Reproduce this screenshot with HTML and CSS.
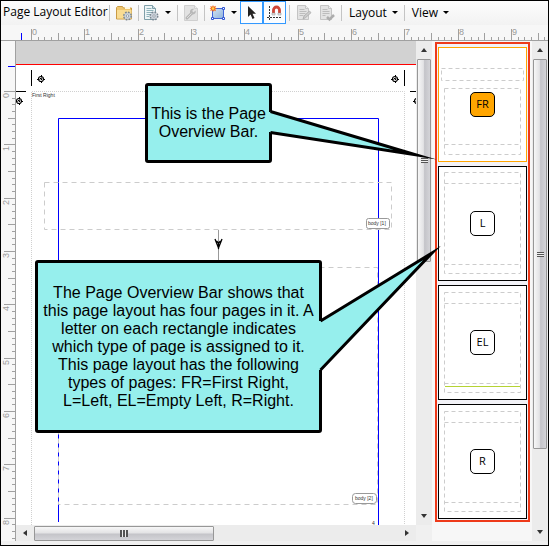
FILE: index.html
```html
<!DOCTYPE html>
<html lang="en">
<head>
<meta charset="utf-8">
<title>Page Layout Editor</title>
<link rel="stylesheet" href="styles.css">
</head>
<body>
<div class="app">
  <header class="toolbar">
    <h1 class="title">Page Layout Editor</h1>
    <span class="sep"></span>
    <button class="tool" aria-label="Open page layout">
      <svg class="icon" viewBox="0 0 16 16"><path d="M.5 14V2.5l1-1h5l1 1.5h8v11z" fill="#efc66e" stroke="#c99b45"/><path d="M9 2h5v2H9z" fill="#fff8e0"/><path d="M1 5h14.500v8.500H1z" fill="#f9dc92"/><g><circle cx="11.500" cy="11" r="3.500" fill="#c5cdd6" stroke="#7c8792" stroke-width="2" stroke-dasharray="1.6 1.150"/><circle cx="11.500" cy="11" r="3" fill="#cbd3db"/><circle cx="11.500" cy="11" r="1.200" fill="#fff" stroke="#7c8792" stroke-width=".7"/></g></svg>
    </button>
    <span class="sep"></span>
    <button class="tool menu" aria-label="Page properties">
      <svg class="icon" viewBox="0 0 16 16"><path d="M.5.5h8l3 3v11H.5z" fill="#eef5f7" stroke="#7f9fa8"/><path d="M8.500.5v3h3" fill="#c6dbe0" stroke="#7f9fa8"/><path d="M2.500 3.500h5M2.500 5.500h7M2.500 7.500h7M2.500 9.500h4M2.500 11.500h3" stroke="#8fb3bb"/><circle cx="10" cy="11" r="3.500" fill="#c5cdd6" stroke="#7c8792" stroke-width="2" stroke-dasharray="1.6 1.150"/><circle cx="10" cy="11" r="3" fill="#cbd3db"/><circle cx="10" cy="11" r="1.200" fill="#fff" stroke="#7c8792" stroke-width=".7"/></svg>
      <span class="caret"></span>
    </button>
    <span class="sep"></span>
    <button class="tool narrow" aria-label="Page tools" disabled>
      <svg class="icon" viewBox="0 0 16 16"><path d="M1.500.5h10l3 3v12h-13z" fill="#e2e2e2" stroke="#cfcfcf"/><path d="M11.500.5v3h3" fill="#eee" stroke="#cfcfcf"/><path d="M4 13l5-5" stroke="#b5b5b5" stroke-width="3" stroke-linecap="round"/><path d="M12.500 5.500l-2 2-1.500-1.500 2-2c-2-.8-4.500.7-4 3.500.5 2 3 2.500 4.500 1.500 1.200-.9 1.600-2.200 1-3.500z" fill="#b8b8b8"/><path d="M4 13l4.500-4.500" stroke="#ddd"/></svg>
    </button>
    <span class="sep"></span>
    <button class="tool menu" aria-label="Insert frame">
      <svg class="icon" viewBox="0 0 16 16"><defs><linearGradient id="fg" x2="1" y2="1"><stop stop-color="#d2e4f4"/><stop offset="1" stop-color="#8fb1da"/></linearGradient></defs><path d="M2.500 3.500h11v10h-11z" fill="url(#fg)" stroke="#4063d8"/><path d="M1.500 12.500h2v2h-2zM12.500 12.500h2v2h-2zM12.500 2.500h2v2h-2z" fill="#fff" stroke="#2f55d4"/><path d="M3 0l.8 1.700L6 .8l-.8 2L7 3.500l-1.800.8.8 2-2-.8L3 7l-.8-1.700-2 .7.800-2L-.5 3.500 1 2.700.2.900l2 .8z" fill="#f26a1b"/><circle cx="3" cy="3.500" r="1.300" fill="#ffd34d"/></svg>
      <span class="caret"></span>
    </button>
    <button class="tool active" aria-label="Select" aria-pressed="true">
      <svg class="icon" viewBox="0 0 16 16"><path d="M4 1v11l2.600-2.500L8.500 14l2-.9-2-4.300H12z" fill="#222"/></svg>
    </button>
    <button class="tool active" aria-label="Snap to guides" aria-pressed="true">
      <svg class="icon" viewBox="0 0 16 16"><path d="M2.500 1v15" stroke="#333" stroke-dasharray="2 1"/><path d="M0 12.500h14" stroke="#333" stroke-dasharray="2 1"/><path d="M6.500 9V5a3 3 0 0 1 6 0v4" fill="none" stroke="#cf4436" stroke-width="2.800"/><path d="M5 8h3v2H5zM11 8h3v2h-3z" fill="#e5e5e5" stroke="#888" stroke-width=".5"/></svg>
    </button>
    <span class="sep"></span>
    <button class="tool" aria-label="Edit page" disabled>
      <svg class="icon" viewBox="0 0 16 16"><path d="M1.500.5h8l3 3v11h-11z" fill="#e3e3e3" stroke="#c4c4c4"/><path d="M9.500.5v3h3" fill="#eee" stroke="#c4c4c4"/><path d="M3.500 4.500h5M3.500 6.500h7M3.500 8.500h6M3.500 10.500h4" stroke="#bdbdbd"/><path d="M7 14l1-3 5.500-5 1.500 1.700-5.500 5z" fill="#ccc" stroke="#aaa" stroke-width=".8"/></svg>
    </button>
    <button class="tool" aria-label="Apply page" disabled>
      <svg class="icon" viewBox="0 0 16 16"><path d="M1.500.5h8l3 3v11h-11z" fill="#e3e3e3" stroke="#c4c4c4"/><path d="M9.500.5v3h3" fill="#eee" stroke="#c4c4c4"/><path d="M3.500 4.500h5M3.500 6.500h7M3.500 8.500h7M3.500 10.500h3" stroke="#bdbdbd"/><path d="M8 12l2.500 2.500L15 10" fill="none" stroke="#adadad" stroke-width="2.500"/></svg>
    </button>
    <span class="sep"></span>
    <button class="text-menu">Layout<span class="caret"></span></button>
    <span class="sep"></span>
    <button class="text-menu">View<span class="caret"></span></button>
  </header>

  <div class="ruler-top"><svg class="ruler-svg"><g id="ticks-x" transform="translate(-1 -25)"></g></svg></div>

  <main class="workspace">
    <div class="ruler-side"><svg class="ruler-svg"><g id="ticks-y" transform="translate(-1 -41)"></g></svg></div>

    <section class="editor">
      <div class="canvas">
        <svg class="drawing" width="400" height="485" viewBox="16 41 400 485">
          <defs>
            <g id="reg" fill="none" stroke="#000"><circle r="2.500" stroke-width="1.200"/><path d="M-4 .5h2.500M2 .5h2M.5-4v2.500M.5 2v2M-1-1l2 2M1-1l-1 2" /></g>
          </defs>
          <path d="M16 41h400v23H16z" fill="#d2d2d2"/>
          <path d="M16 64h400v1H16z" fill="#f00"/>
          <path d="M31.500 525V91.500h373V525" fill="none" stroke="#d0d0d0" stroke-dasharray="1 1"/>
          <path d="M31.500 70v16M16 91.500h10M404.500 70v16M410 91.500h6" stroke="#000"/>
          <use href="#reg" x="41" y="79"/><use href="#reg" x="19" y="101"/>
          <use href="#reg" x="395" y="79"/><use href="#reg" x="417" y="101"/>
          <text x="32" y="97" class="tiny">First Right</text>
          <path d="M58.500 522V118.500h320V525" fill="none" stroke="#00f"/>
          <path d="M44.500 182.500h347v47h-347z" fill="none" stroke="#ccc" stroke-dasharray="5 4"/>
          <path d="M58.500 267.500h319v237h-319z" fill="none" stroke="#ccc" stroke-dasharray="5 4"/>
          <path d="M218.500 230v32" stroke="#999"/>
          <path d="M215 239l3.500 9 3.500-9M216.500 241l2 2 2-2M218.500 243v6" fill="none" stroke="#000" stroke-width="1.300"/>
          <rect x="366.500" y="218.500" width="23" height="10" rx="2" fill="#fff" stroke="#999"/>
          <text x="368" y="225" class="tiny">body [1]</text>
          <rect x="352.500" y="493.500" width="24" height="10" rx="3" fill="#fff" stroke="#999"/>
          <text x="355" y="500" class="tiny">body [2]</text>
          <text x="372" y="525" class="tiny">4</text>
        </svg>
      </div>
      <div class="bar horizontal" aria-hidden="true"><span class="arrow left"></span><span class="thumb thumb-page-x"></span><span class="arrow right"></span></div>
    </section>

    <div class="bar vertical canvas-bar" aria-hidden="true"><span class="arrow up"></span><span class="thumb thumb-page-y"></span><span class="arrow down"></span></div>

    <aside class="overview" aria-label="Page Overview Bar">
      <div class="frame">
        <button class="page selected"><svg class="page-lines" viewBox="0 0 89 115"><path d="M3.500 21.500h82v12h-82zM6.500 41.500h76v66h-76zM6.500 97.500h76"/></svg><span class="badge">FR</span></button>
        <button class="page"><svg class="page-lines" viewBox="0 0 89 115"><path d="M6.500 6.500h76v101h-76zM6.500 17.500h76M6.500 98.500h76"/></svg><span class="badge">L</span></button>
        <button class="page"><svg class="page-lines" viewBox="0 0 89 115"><path d="M6.500 7.500h76v100h-76zM6.500 18.500h76M6.500 98.500h76"/><path class="footline" d="M7 101.500h75"/></svg><span class="badge">EL</span></button>
        <button class="page"><svg class="page-lines" viewBox="0 0 89 115"><path d="M6.500 7.500h76v100h-76zM6.500 18.500h76M6.500 98.500h76"/></svg><span class="badge">R</span></button>
      </div>
    </aside>

    <div class="bar vertical" aria-hidden="true"><span class="arrow up"></span><span class="thumb thumb-overview"></span><span class="arrow down"></span></div>
  </main>
  <footer class="status"></footer>

  <div class="callout callout-name">
    <p>This is the Page<br>Overview Bar.</p>
    <svg class="tail" width="170" height="75"><path class="opening" d="M0 26h3v20H0z"/><path d="M1.500 25.500L146.500 68.700 1.500 46.500"/></svg>
  </div>
  <div class="callout callout-detail">
    <p>The Page Overview Bar shows that<br>this page layout has four pages in it. A<br>letter on each rectangle indicates<br>which type of page is assigned to it.<br>This page layout has the following<br>types of pages: FR=First Right,<br>L=Left, EL=Empty Left, R=Right.</p>
    <svg class="tail" width="124" height="130"><path class="opening" d="M0 58h3v49H0z"/><path d="M1.500 58L113-10 1.500 107"/></svg>
  </div>
</div>
<script src="rulers.js"></script>
</body>
</html>
```
FILE: styles.css
```css
* { box-sizing: border-box; }

body {
  margin: 0;
  font-family: "Open Sans", "Noto Sans", sans-serif;
  font-size: 12px;
  color: #000;
}

button {
  font: inherit;
  color: inherit;
  border: 0;
  padding: 0;
  background: none;
}

svg { display: block; }

.app {
  position: relative;
  display: flex;
  flex-direction: column;
  height: 100vh;
  border: 1px solid #000;
  background: #f0f0f0;
  overflow: hidden;
}

/* Toolbar */
.toolbar {
  flex: 0 0 24px;
  display: flex;
  align-items: stretch;
  background: linear-gradient(#fdfdfd, #f2f2f2);
}
.title {
  margin: 0;
  padding-left: 2px;
  width: 105px;
  font-size: 12px;
  font-weight: 400;
  line-height: 22px;
  white-space: nowrap;
}
.sep {
  flex: 0 0 1px;
  margin: 4px 2px 4px 3px;
  background: #c4c4c4;
}
.tool {
  flex: 0 0 23px;
  height: 23px;
  display: flex;
  align-items: center;
  justify-content: center;
}
.tool.narrow { flex-basis: 21px; }
.tool.menu {
  flex-basis: 33px;
  justify-content: flex-start;
  padding-left: 3px;
  gap: 5px;
}
.tool.active {
  border: 1px solid #3399ff;
  background: #fbfdff;
}
.icon { width: 16px; height: 16px; flex: none; overflow: visible; }
.caret {
  border: 3px solid transparent;
  border-top-color: #000;
  border-bottom: 0;
}
.text-menu {
  display: flex;
  align-items: center;
  gap: 5px;
  height: 22px;
  padding: 0 3px 0 5px;
}

/* Rulers */
.ruler-top {
  flex: 0 0 16px;
  min-height: 0;
  background: #f7f7f7;
  border-bottom: 1px solid #a0a0a0;
}
.ruler-side {
  flex: 0 0 15px;
  min-width: 0;
  background: #f7f7f7;
  border-right: 1px solid #a0a0a0;
}
.ruler-svg { width: 100%; height: 100%; }
.ruler-svg path { stroke: #a0a0a0; }
.ruler-svg .cursor { stroke: #00f; }
.ruler-svg text {
  font-family: "Liberation Sans", sans-serif;
  font-size: 9px;
  fill: #999;
}

/* Work area */
.workspace { flex: 1; display: flex; min-height: 0; }
.editor { flex: 1; min-width: 0; display: flex; flex-direction: column; }
.canvas { flex: 1; min-height: 0; overflow: hidden; background: #fff; }
.tiny {
  font-family: "Liberation Sans", sans-serif;
  font-size: 5px;
  fill: #333;
}
.status { flex: 0 0 4px; }

/* Scroll bars */
.bar { display: flex; background: #ececec; }
.bar.vertical { flex: 0 0 16px; flex-direction: column; align-items: center; }
.bar.horizontal { flex: 0 0 16px; align-items: center; }
.canvas-bar { margin-bottom: 16px; }
.arrow {
  flex: 0 0 18px;
  align-self: stretch;
  display: flex;
  align-items: center;
  justify-content: center;
}
.arrow::before { content: ""; border: 3px solid transparent; }
.arrow.up::before { border-bottom: 4px solid #333; border-top: 0; }
.arrow.down::before { border-top: 4px solid #333; border-bottom: 0; }
.arrow.left::before { border-right: 4px solid #333; border-left: 0; }
.arrow.right::before { border-left: 4px solid #333; border-right: 0; }
.arrow.down { margin-top: auto; }
.arrow.right { margin-left: auto; }
.thumb {
  display: flex;
  align-items: center;
  justify-content: center;
  border: 1px solid #979797;
  border-radius: 1px;
}
.vertical .thumb { width: 14px; background: linear-gradient(90deg, #f7f7f7, #e3e3e5 45%, #c4c4c9 55%, #d4d4d8); }
.horizontal .thumb { height: 15px; background: linear-gradient(#f7f7f7, #e3e3e5 45%, #c4c4c9 55%, #d4d4d8); }
.thumb::before { content: ""; }
.vertical .thumb::before { width: 7px; height: 5px; background: repeating-linear-gradient(#555 0 1px, #eee 1px 2px); }
.horizontal .thumb::before { width: 8px; height: 7px; background: repeating-linear-gradient(90deg, #555 0 2px, #eee 2px 3px); }
.thumb-page-x { width: 45%; }
.thumb-page-y { height: 42%; }
.thumb-overview { height: 78%; }

/* Page overview */
.overview { flex: 0 0 100px; background: #f7f7f7; }
.frame {
  display: flex;
  flex-direction: column;
  gap: 4px;
  margin: 1px 2px 0 3px;
  padding: 3px 1px 1px;
  border: 2px solid #ee3a1a;
  background: #f2f2f7;
}
.page {
  position: relative;
  display: flex;
  align-items: center;
  justify-content: center;
  height: 115px;
  background: #fff;
  outline: 1px solid #000;
  outline-offset: -1px;
}
.page.selected { outline-color: #ffa500; }
.page-lines {
  position: absolute;
  inset: 0;
  width: 100%;
  height: 100%;
  fill: none;
  stroke: #ccc;
  stroke-dasharray: 4 3;
}
.page-lines .footline { stroke: #b5d334; stroke-dasharray: none; }
.badge {
  position: relative;
  width: 25px;
  height: 25px;
  border: 1px solid #000;
  border-radius: 5px;
  background: #fff;
  font-size: 11px;
  line-height: 22px;
  text-align: center;
}
.selected .badge { background: #ffa500; }

/* Annotation callouts */
.callout {
  position: absolute;
  display: flex;
  align-items: center;
  justify-content: center;
  border: 3px solid #000;
  border-radius: 3px;
  background: #96efed;
  font-family: "Liberation Sans", Arial, sans-serif;
  font-size: 16px;
  line-height: 18px;
  text-align: center;
  white-space: nowrap;
}
.callout p { margin: 0; }
.callout-name { left: 144px; top: 82px; width: 127px; height: 80px; }
.callout-detail { left: 34px; top: 259px; width: 287px; height: 173px; }
.tail {
  position: absolute;
  left: 100%;
  top: 0;
  fill: #96efed;
  stroke: #000;
  stroke-width: 3;
  stroke-miterlimit: 20;
  overflow: visible;
}
.tail .opening { stroke: none; }
```
FILE: rulers.js
```js
// Draws ruler ticks: one unit is 160/3 px, divided into eighths.
const NS = "http://www.w3.org/2000/svg";
const UNIT = 160 / 3;

function add(parent, name, attrs, text) {
  const el = document.createElementNS(NS, name);
  for (const key in attrs) el.setAttribute(key, attrs[key]);
  if (text !== undefined) el.textContent = text;
  parent.appendChild(el);
}

function drawRuler(group, vertical, origin, edge, cursor, end) {
  const lineAt = (pos, len) =>
    vertical ? `M${edge - len} ${pos + 0.5}h${len}` : `M${pos + 0.5} ${edge - len}v${len}`;
  for (let i = 0; origin + (i * UNIT) / 8 < end; i++) {
    const pos = Math.round(origin + (i * UNIT) / 8);
    const len = i % 8 === 0 ? 11 : i % 4 === 0 ? 7 : 3;
    add(group, "path", { d: lineAt(pos, len) });
    if (i % 8 === 0) {
      const attrs = vertical
        ? { transform: `translate(9 ${pos + 7}) rotate(-90)` }
        : { x: pos + 1, y: 35 };
      add(group, "text", attrs, i / 8);
    }
  }
  add(group, "path", { class: "cursor", d: lineAt(cursor, 7) });
}

drawRuler(document.getElementById("ticks-x"), false, 31, 40, 21, window.innerWidth - 1);
drawRuler(document.getElementById("ticks-y"), true, 91, 15, 66, window.innerHeight - 5);
```
